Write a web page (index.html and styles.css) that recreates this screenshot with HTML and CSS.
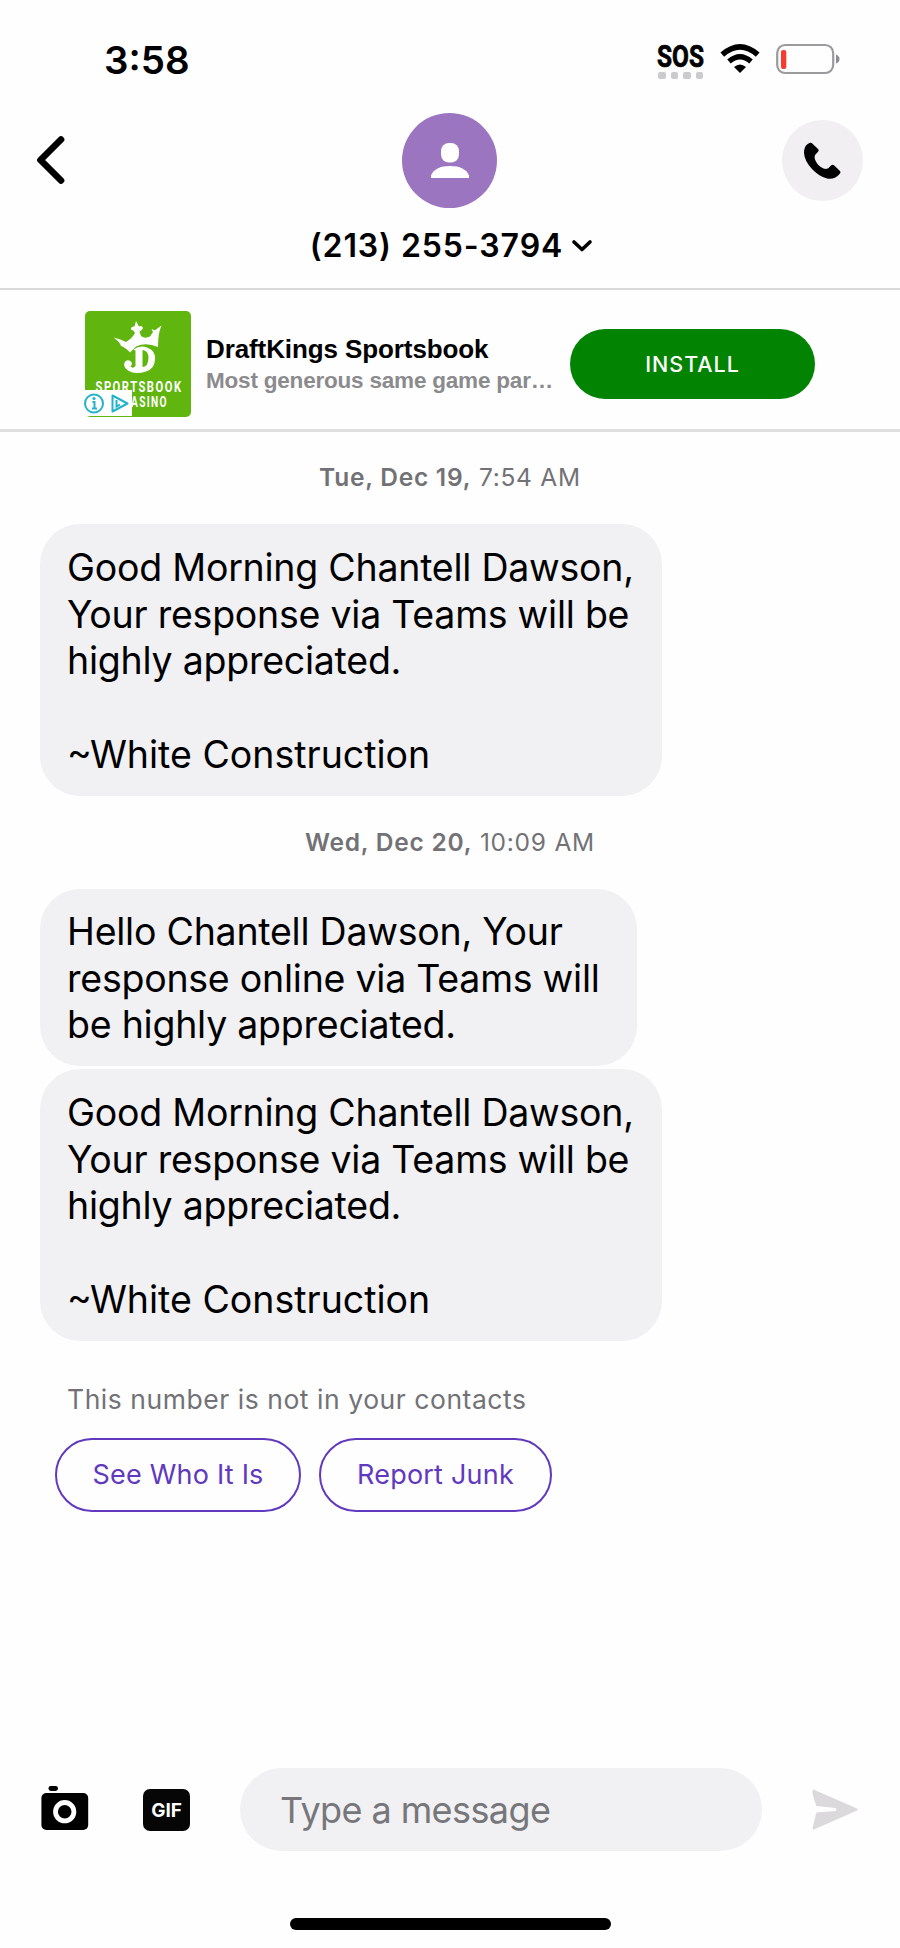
FILE: index.html
```html
<!DOCTYPE html>
<html lang="en">
<head>
<meta charset="utf-8">
<title>Messages</title>
<link rel="stylesheet" href="styles.css">
</head>
<body>
<div class="screen">
  <div class="status">
    <span class="time">3:58</span>
    <div class="indicators">
      <div class="sos"><svg width="50" height="28" viewBox="-1 -2 50 28"><text x="0" y="23" class="sos-text" textLength="47" lengthAdjust="spacingAndGlyphs">SOS</text></svg><div class="dots"><i></i><i></i><i></i><i></i></div></div>
      <svg class="wifi" width="40" height="30" viewBox="0 0 40 30"><path d="M2.300 10.700Q20-4.800 37.700 10.700" fill="none" stroke="#000" stroke-width="5.600"/><path d="M9 17.500Q20 8 31 17.500" fill="none" stroke="#000" stroke-width="5.400"/><path d="M14 23Q20 18 26 23L20 29Z"/></svg>
      <svg class="battery" width="64" height="32" viewBox="0 0 64 32"><rect x="1.200" y="2" width="56" height="28" rx="8" fill="none" stroke="#9b9a9d" stroke-width="2.200"/><rect x="5" y="7" width="5.300" height="19" rx="2" fill="#f63b30"/><path d="M60 11.500Q63.500 13 63.500 16T60 20.500Z" fill="#8d8c8f"/></svg>
    </div>
  </div>
  <header class="header">
    <svg class="back" width="32" height="52" viewBox="0 0 32 52"><path d="M26 5.500L5.500 26L26 46.500" fill="none" stroke="#000" stroke-width="6.700" stroke-linecap="round" stroke-linejoin="round"/></svg>
    <div class="contact">
      <div class="avatar"><svg width="40" height="36" viewBox="0 0 40 36"><rect x="11" y="0" width="18" height="19.500" rx="8"/><path d="M1 35V32.500Q5 23 20 23T39 32.500V35Z"/></svg></div>
      <div class="number"><span>(213) 255-3794</span><svg width="22" height="16" viewBox="0 0 22 16"><path d="M3 4L11 11.500L19 4" fill="none" stroke="#000" stroke-width="3.600" stroke-linecap="round" stroke-linejoin="round"/></svg></div>
    </div>
    <div class="call"><svg width="38" height="38" viewBox="0 0 38 38"><path d="M7 .8Q8 .4 9 1.200L15.300 7.300Q16.500 8.500 14 11Q10.500 13.500 12 17.500Q14 23.500 20.500 26.500Q25 28 27 24.500Q29 22 31 23.300L37 29Q38 30 37 31.500Q32 37.800 24 36.500Q16 34.500 9 27Q1.500 19 1 11Q1 4 5 1.800Q6 1.200 7 .8Z"/></svg></div>
  </header>
  <section class="ad">
    <div class="ad-logo">
      <svg width="106" height="106" viewBox="0 0 106 106">
        <path fill="#fff" d="M28.500 26.500Q36 28 41 31Q46 28 48.500 24.500L50 22Q49 19 46 18.500Q46 15 49.500 15.500L51 10L54 15.500Q57 14 58 17Q57 20 54.500 20.500L56 25Q60 28 65 25.500L68 21L66.500 18Q70 20 71 18.500L76.500 14.500Q73 22 73 36Q61 31 51 35.500L45 41.500Q40 36 36 35Q35 31 28.500 26.500Z"/>
        <path fill="#fff" fill-rule="evenodd" d="M48.500 38.500Q55 34 62 36.500Q71 40 70 48.500Q69.500 58 61 60.500Q50 64 43 59.500Q38 56 39.500 51.500Q42 47.500 46 50.500Q48 53 45.500 55.500Q48 58 50.500 55V39.500ZM57.500 39V56Q63 56 63.500 47Q63.500 39.500 57.500 39Z"/>
        <text x="10.500" y="80.500" class="logo-text" textLength="87" lengthAdjust="spacingAndGlyphs">SPORTSBOOK</text>
        <text x="26" y="95.500" class="logo-text" textLength="57" lengthAdjust="spacingAndGlyphs">&amp; CASINO</text>
      </svg>
      <div class="choices"><svg width="48" height="28" viewBox="0 0 48 28"><circle cx="10" cy="13.500" r="9" fill="none" stroke="#22b3cc" stroke-width="2"/><path d="M8.500 12H10.500V18.500M8 18.500H13" fill="none" stroke="#22b3cc" stroke-width="2"/><circle cx="10" cy="8.500" r="1.600" fill="#22b3cc"/><path d="M28.500 5.500L43.500 13.500L28.500 21.500Z" fill="none" stroke="#22b3cc" stroke-width="2" stroke-linejoin="round"/><path d="M32.500 10V16.500L36 14.500" fill="none" stroke="#22b3cc" stroke-width="2"/></svg></div>
    </div>
    <div class="ad-copy"><div class="ad-title">DraftKings Sportsbook</div><div class="ad-sub">Most generous same game par…</div></div>
    <div class="install"><span>INSTALL</span></div>
  </section>
  <main class="thread">
    <div class="date d1"><b>Tue, Dec 19,</b> 7:54 AM</div>
    <div class="bubble wide">Good Morning Chantell Dawson,<br>Your response via Teams will be<br>highly appreciated.<br><br><span class="signature">~White Construction</span></div>
    <div class="date d2"><b>Wed, Dec 20,</b> 10:09 AM</div>
    <div class="bubble narrow">Hello Chantell Dawson, Your<br>response online via Teams will<br>be highly appreciated.</div>
    <div class="bubble wide">Good Morning Chantell Dawson,<br>Your response via Teams will be<br>highly appreciated.<br><br><span class="signature">~White Construction</span></div>
    <div class="note">This number is not in your contacts</div>
    <div class="actions"><div class="pill who"><span>See Who It Is</span></div><div class="pill junk"><span>Report Junk</span></div></div>
  </main>
  <footer class="composer">
    <svg class="camera" width="48" height="46" viewBox="0 0 48 46"><rect x="7.500" y="1" width="9.500" height="5" rx="2.400"/><rect x=".4" y="8" width="46.800" height="37" rx="5"/><circle cx="23.700" cy="26.700" r="9.200" fill="none" stroke="#fff" stroke-width="4.800"/></svg>
    <div class="gif">GIF</div>
    <div class="field"><span>Type a message</span></div>
    <svg class="send" width="47" height="44" viewBox="0 0 48 44"><path d="M2 1.200L46 20.500Q47.500 21.500 46 22.500L2 42Q.5 42 .6 40L4.500 24.500L24 23Q26 21.500 24 20L4.500 18Q.8 8 .4 3Q.5 1 2 1.200Z" fill="#dcd9dd"/></svg>
  </footer>
  <div class="home"></div>
</div>
</body>
</html>
```
FILE: styles.css
```css
* { box-sizing: border-box; }
body { margin: 0; background: #fefefe; }
.screen { width: 900px; height: 1948px; display: flex; flex-direction: column; font-family: Inter, "Liberation Sans", sans-serif; color: #000; white-space: nowrap; }
svg { display: block; flex: none; overflow: visible; }
.status { height: 113px; flex: none; display: flex; justify-content: space-between; padding: 0 60px 0 104px; }
.time { font-size: 38.500px; font-weight: 600; line-height: 46px; margin-top: 37px; }
.indicators { display: flex; align-items: flex-start; }
.sos { width: 50px; margin: 42px 14px 0 0; }
.sos-text { font: 700 31.500px Roboto, sans-serif; stroke: #000; stroke-width: .7px; }
.dots { display: flex; gap: 5px; padding: 2px 0 0 2px; }
.dots i { width: 7.500px; height: 7px; border-radius: 2px; background: #cbcacc; }
.wifi { margin: 44px 16px 0 0; }
.battery { margin-top: 43px; }
.header { height: 177px; flex: none; display: flex; justify-content: space-between; border-bottom: 2px solid #d9d9da; padding: 0 37px 0 35px; }
.back { margin-top: 21px; }
.contact { display: flex; flex-direction: column; align-items: center; padding-left: 51px; }
.avatar { width: 95px; height: 95px; border-radius: 50%; background: #9b75bf; display: flex; justify-content: center; padding-top: 30px; fill: #fff; }
.number { display: flex; align-items: center; gap: 8px; margin-top: 18px; padding-left: 3px; font-size: 32px; line-height: 40px; font-weight: 600; letter-spacing: .9px; }
.call { width: 81px; height: 81px; border-radius: 50%; background: #f1eff2; margin-top: 7px; display: flex; align-items: center; justify-content: center; }
.ad { height: 142px; flex: none; display: flex; align-items: flex-start; padding: 21px 0 0 85px; border-bottom: 3px solid #dfdee0; }
.ad-logo { position: relative; width: 106px; height: 106px; border-radius: 5px; background: #61b50f; }
.logo-text { font: 700 15px Roboto, sans-serif; letter-spacing: 2px; fill: #fff; }
.choices { position: absolute; left: -1px; bottom: 1px; background: #fff; width: 48px; height: 26px; }
.ad-copy { width: 364px; padding: 21px 0 0 15px; font-family: "Liberation Sans", sans-serif; font-weight: 700; }
.ad-title { font-size: 26px; line-height: 34px; letter-spacing: -.1px; }
.ad-sub { font-size: 22.500px; line-height: 30px; letter-spacing: -.2px; color: #8b8a8d; }
.install { width: 245px; height: 70px; border-radius: 35px; margin: 18px 0 0 15px; background: #028302; color: #fff; font-size: 21.500px; font-weight: 500; display: flex; align-items: center; justify-content: center; letter-spacing: 1px; }
.thread { flex: 1; display: flex; flex-direction: column; align-items: flex-start; }
.date { align-self: center; font-size: 24.500px; line-height: 30px; letter-spacing: .75px; color: #727276; }
.date b { font-weight: 600; }
.d1 { margin: 30px 0 32px; }
.d2 { margin: 31px 0 32px; }
.bubble { margin-left: 40px; padding: 21px 27px; border-radius: 40px; background: #f1f0f3; font-size: 37.500px; line-height: 46.700px; letter-spacing: -.24px; }
.signature { letter-spacing: 0; }
.wide { width: 622px; height: 272px; }
.narrow { width: 597px; height: 177px; margin-bottom: 3px; padding-top: 20px; }
.note { margin: 42px 0 0 67px; font-size: 26.500px; line-height: 32px; color: #727276; letter-spacing: .54px; }
.actions { display: flex; gap: 18px; margin: 23px 0 0 55px; }
.pill { height: 74px; border: 2.500px solid #6039be; border-radius: 37px; color: #6039be; font-size: 27px; letter-spacing: .22px; padding-bottom: 2px; display: flex; align-items: center; justify-content: center; }
.who { width: 246px; }
.junk { width: 233px; }
.composer { height: 84px; flex: none; display: flex; align-items: flex-start; padding-left: 41px; }
.camera { margin-top: 17px; }
.gif { width: 47px; height: 42px; border-radius: 7px; background: #060606; color: #fff; margin: 21px 0 0 54px; font-size: 19px; font-weight: 700; line-height: 43px; text-align: center; }
.field { width: 522px; height: 83px; border-radius: 42px; background: #f1f0f2; margin-left: 50px; padding-left: 40px; font-size: 36px; line-height: 84px; letter-spacing: -.58px; color: #77767a; }
.send { margin: 20px 0 0 50px; }
.home { width: 321px; height: 12px; border-radius: 6px; background: #000; flex: none; margin: 66px 0 18px 290px; }
```
